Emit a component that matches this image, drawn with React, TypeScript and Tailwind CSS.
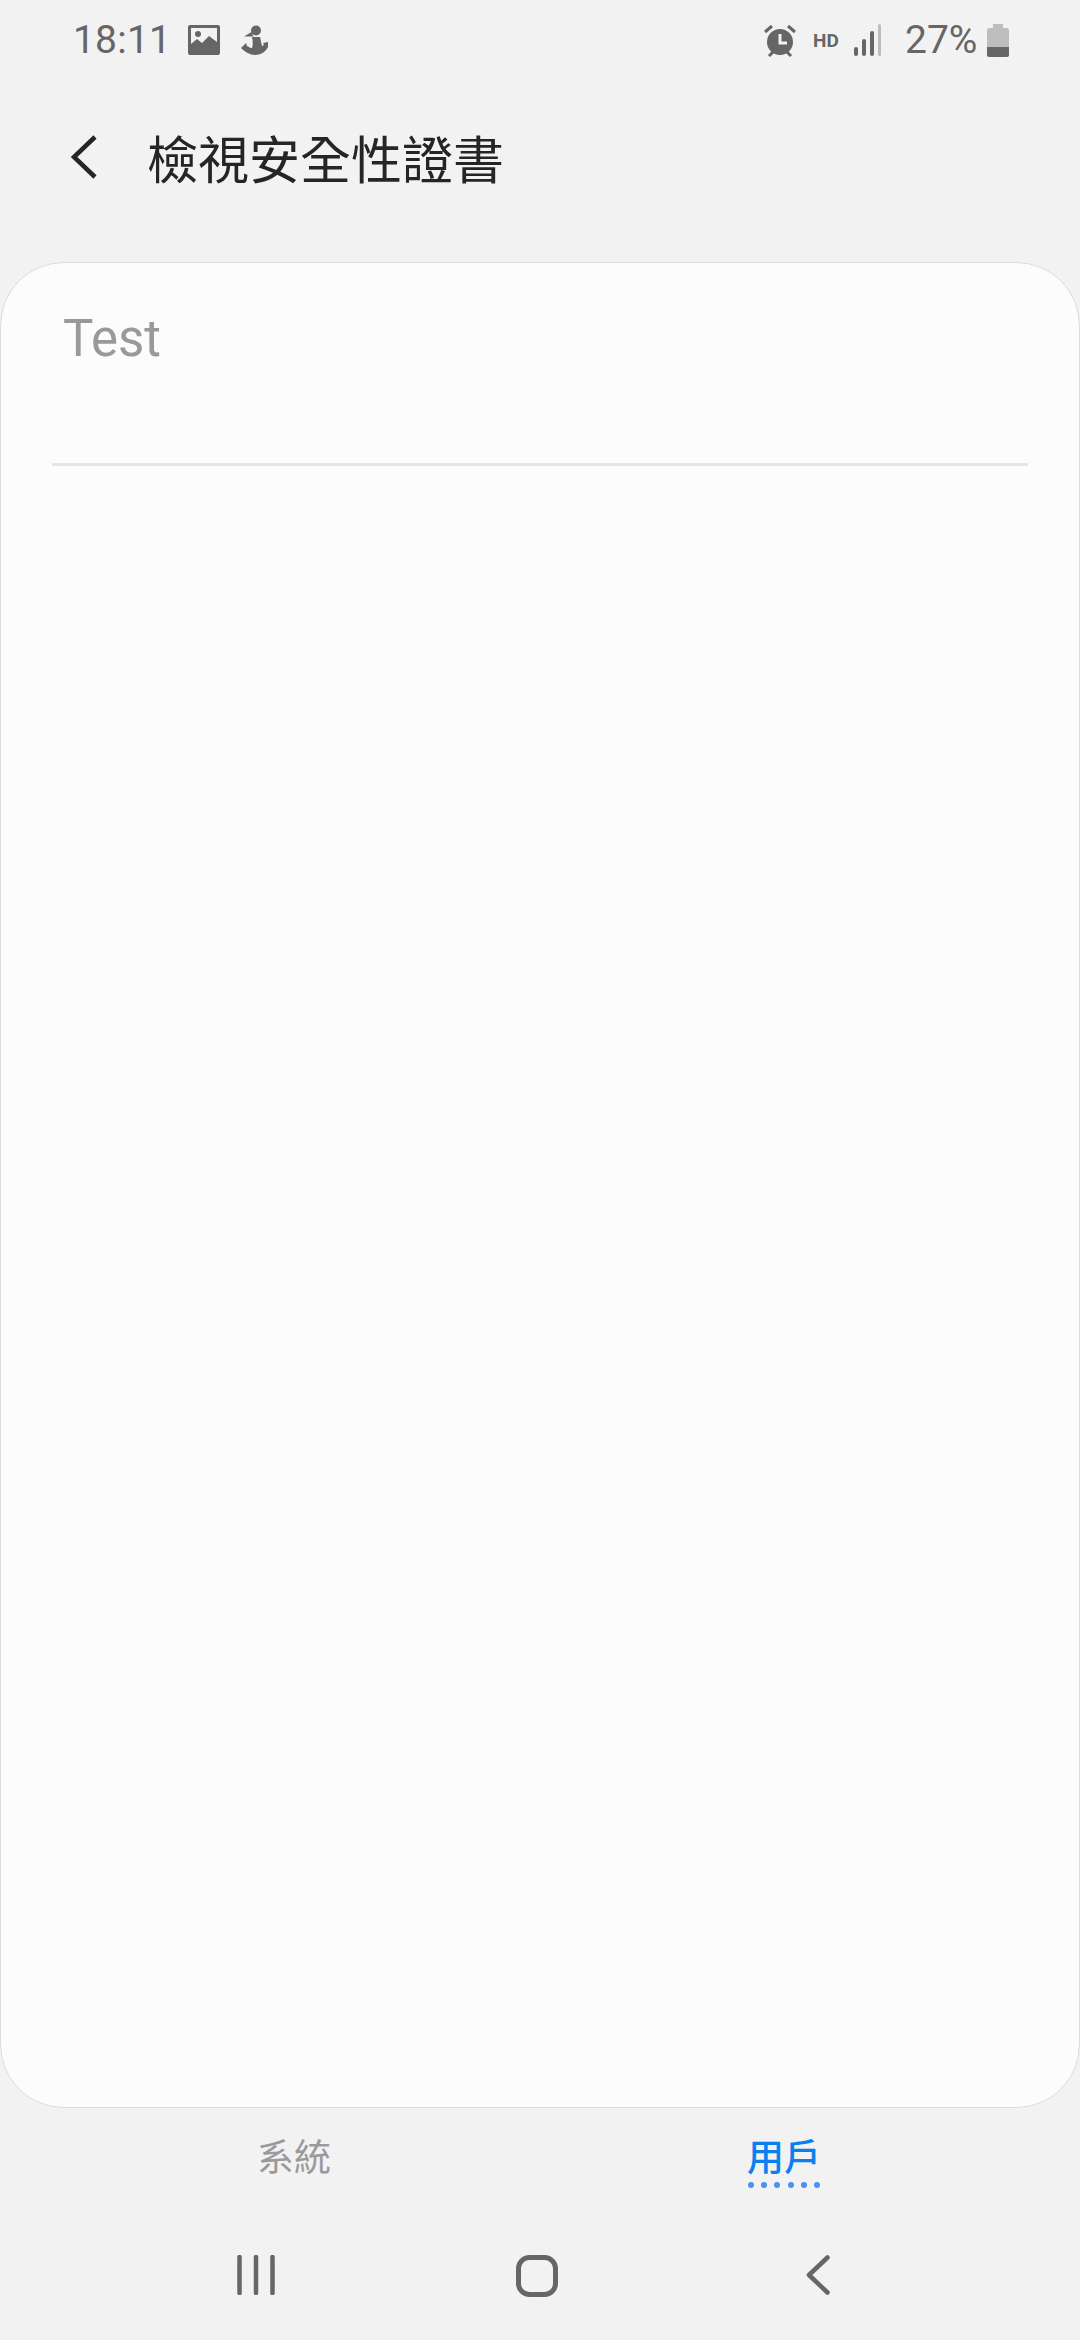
import React from "react";

const cjk = { fontFamily: '"Noto Sans CJK TC", sans-serif' };

const StatusBar = () => (
  <div className="h-[80px] pl-[73px] pr-[71px] flex items-center justify-between text-[#666666] font-['Roboto',sans-serif]">
    <div className="flex items-center">
      <span className="text-[39px] leading-none tracking-[0.2px] w-[115px]">18:11</span>
      <svg width="32" height="30" viewBox="0 0 32 30" className="mr-[20px]">
        <path
          fillRule="evenodd"
          fill="#666666"
          d="M2 0h28a2 2 0 0 1 2 2v26a2 2 0 0 1-2 2H2a2 2 0 0 1-2-2V2a2 2 0 0 1 2-2zM3 3v16l6-5 5 4 7-7 8 6V3zM10 6a3 3 0 1 1 0 6a3 3 0 0 1 0-6z"
        />
      </svg>
      <svg width="28" height="30" viewBox="0 0 28 30">
        <circle cx="16" cy="5.500" r="5" fill="#666666" />
        <path d="M4 11.500 11.500 7 13.500 11.500z" fill="#666666" />
        <path
          fill="#666666"
          d="M12 12h8c1 3 1 6 2 9l2-1-1-2 5-1v5c-2 4-6 8-13 8-5 0-10-3-14-7l5-5 1 3 2 1c1 1 2 1 3 1 1-3 1-7 0-11z"
        />
      </svg>
    </div>
    <div className="flex items-center">
      <svg width="34" height="33" viewBox="0 0 34 33" className="mr-[16px] ml-[3px]">
        <circle cx="17" cy="18" r="13" fill="#666666" />
        <path d="M17 10v9h7" stroke="#f2f2f2" strokeWidth="3" fill="none" />
        <path d="M2 8 9 2M32 8 25 2M6 32l4-4M28 32l-4-4" stroke="#666666" strokeWidth="3" />
      </svg>
      <span className="text-[19px] font-bold leading-none w-[41px] font-['Roboto',sans-serif]">HD</span>
      <svg width="28" height="32" viewBox="0 0 28 32" className="mr-[23px]">
        <rect x="0" y="23" width="4" height="9" rx="2" fill="#666666" />
        <rect x="8" y="15" width="4" height="17" rx="2" fill="#666666" />
        <rect x="16" y="7" width="4" height="25" rx="2" fill="#666666" />
        <rect x="24" y="0" width="3" height="32" rx="1.5" fill="#bdbdbd" />
      </svg>
      <span className="text-[39px] leading-none w-[82px]">27%</span>
      <svg width="22" height="33" viewBox="0 0 22 33">
        <rect x="6" y="0" width="10" height="5" fill="#bdbdbd" />
        <rect x="0" y="4" width="22" height="29" rx="2.5" fill="#bdbdbd" />
        <path d="M0 23h22v7.5a2.5 2.5 0 0 1-2.5 2.500h-17A2.500 2.500 0 0 1 0 30.500z" fill="#666666" />
      </svg>
    </div>
  </div>
);

const Header = () => (
  <div className="h-[182px] flex items-start pl-[71px] pt-[45px]">
    <svg width="26" height="44" viewBox="0 0 26 44" className="mt-[10px] mr-[50px]">
      <path d="M24 2 3 22l21 20" fill="none" stroke="#252525" strokeWidth="4.500" />
    </svg>
    <h1 style={cjk} className="text-[51px] leading-[64px] font-normal text-[#252525]">
      檢視安全性證書
    </h1>
  </div>
);

const Dots = () => (
  <div className="flex justify-between w-[72px] mt-[2px]">
    {[0, 1, 2, 3, 4, 5].map((i) => (
      <span key={i} className="w-[6px] h-[6px] rounded-full bg-[#4a90f0]" />
    ))}
  </div>
);

const BottomTabs = () => (
  <div className="h-[84px] grid grid-cols-2 pl-[49px] pr-[51px] pt-[22px]">
    <div className="flex flex-col items-center">
      <span style={cjk} className="text-[37px] leading-[50px] text-[#9a9a9a]">系統</span>
    </div>
    <div className="flex flex-col items-center">
      <span style={cjk} className="text-[37px] leading-[50px] font-medium text-[#0a7ff0]">用戶</span>
      <Dots />
    </div>
  </div>
);

const NavBar = () => (
  <div className="flex-1 grid grid-cols-3 pl-[115px] pr-[122px] pt-[63px]">
    <div className="flex justify-center">
      <svg width="38" height="40" viewBox="0 0 38 40">
        <path d="M2.500 2v36M19 2v36M35.500 2v36" stroke="#666666" strokeWidth="4.500" strokeLinecap="round" />
      </svg>
    </div>
    <div className="flex justify-center">
      <svg width="42" height="42" viewBox="0 0 42 42">
        <rect x="2.500" y="2.500" width="37" height="37" rx="11" fill="none" stroke="#666666" strokeWidth="5" />
      </svg>
    </div>
    <div className="flex justify-center">
      <svg width="24" height="40" viewBox="0 0 24 40">
        <path d="M21.500 2.500 3 20l18.500 17.500" fill="none" stroke="#666666" strokeWidth="4.500" strokeLinecap="round" strokeLinejoin="round" />
      </svg>
    </div>
  </div>
);

export default function App() {
  return (
    <div className="w-[1080px] h-[2340px] bg-[#f2f2f2] flex flex-col overflow-hidden">
      <StatusBar />
      <Header />
      <div className="h-[1846px] bg-[#fcfcfc] border border-[#dcdcdc] rounded-[64px] px-[51px] flex flex-col">
        <div className="h-[203px] border-b-[3px] border-[#e6e6e6]">
          <p className="pl-[11px] pt-[46px] text-[51px] leading-[60px] text-[#999999] font-['Roboto',sans-serif]">Test</p>
        </div>
      </div>
      <BottomTabs />
      <NavBar />
    </div>
  );
}
